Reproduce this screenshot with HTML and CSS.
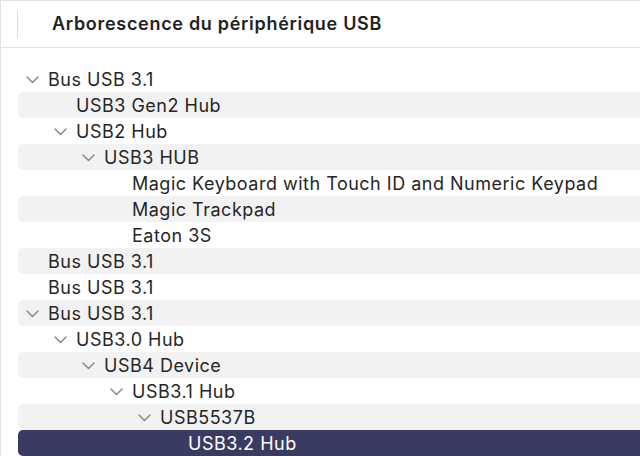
FILE: index.html
```html
<!DOCTYPE html>
<html lang="fr">
<head>
  <meta charset="UTF-8" />
  <meta name="viewport" content="width=device-width, initial-scale=1.0"/>
  <title>Arborescence du périphérique USB</title>
  <link rel="stylesheet" href="styles.css">
</head>
<body>
  <div class="header">
    <span class="col-sep"></span>
    <h2>Arborescence du périphérique USB</h2>
  </div>

  <ul class="tree">
    <li class="row lvl-0"><span class="toggle open"><svg viewBox="0 0 13 8"><polyline points="1,1 6.5,6.5 12,1"/></svg></span>Bus USB 3.1</li>
    <li class="row lvl-1 alt"><span class="toggle"></span>USB3 Gen2 Hub</li>
    <li class="row lvl-1"><span class="toggle open"><svg viewBox="0 0 13 8"><polyline points="1,1 6.5,6.5 12,1"/></svg></span>USB2 Hub</li>
    <li class="row lvl-2 alt"><span class="toggle open"><svg viewBox="0 0 13 8"><polyline points="1,1 6.5,6.5 12,1"/></svg></span>USB3 HUB</li>
    <li class="row lvl-3"><span class="toggle"></span>Magic Keyboard with Touch ID and Numeric Keypad</li>
    <li class="row lvl-3 alt"><span class="toggle"></span>Magic Trackpad</li>
    <li class="row lvl-3"><span class="toggle"></span>Eaton 3S</li>
    <li class="row lvl-0 alt"><span class="toggle"></span>Bus USB 3.1</li>
    <li class="row lvl-0"><span class="toggle"></span>Bus USB 3.1</li>
    <li class="row lvl-0 alt"><span class="toggle open"><svg viewBox="0 0 13 8"><polyline points="1,1 6.5,6.5 12,1"/></svg></span>Bus USB 3.1</li>
    <li class="row lvl-1"><span class="toggle open"><svg viewBox="0 0 13 8"><polyline points="1,1 6.5,6.5 12,1"/></svg></span>USB3.0 Hub</li>
    <li class="row lvl-2 alt"><span class="toggle open"><svg viewBox="0 0 13 8"><polyline points="1,1 6.5,6.5 12,1"/></svg></span>USB4 Device</li>
    <li class="row lvl-3"><span class="toggle open"><svg viewBox="0 0 13 8"><polyline points="1,1 6.5,6.5 12,1"/></svg></span>USB3.1 Hub</li>
    <li class="row lvl-4 alt"><span class="toggle open"><svg viewBox="0 0 13 8"><polyline points="1,1 6.5,6.5 12,1"/></svg></span>USB5537B</li>
    <li class="row lvl-5 selected"><span class="toggle"></span>USB3.2 Hub</li>
  </ul>
</body>
</html>
```

FILE: styles.css
```css
body {
  margin: 0;
  height: 456px;
  overflow: hidden;
  font-family: Inter, "Liberation Sans", sans-serif;
  color: #262626;
  background: #fff;
  border-left: 1px solid #e2e2e2;
  border-top: 1px solid #e2e2e2;
  box-sizing: border-box;
}
.header {
  display: flex;
  align-items: center;
  height: 46px;
  border-bottom: 1px solid #e2e2e2;
}
.col-sep {
  width: 1px;
  height: 27px;
  margin-left: 16px;
  background: #dcdcdc;
}
.header h2 {
  margin: 0 0 2px 34px;
  font-size: 18px;
  font-weight: 600;
  letter-spacing: 0.7px;
  color: #222;
}
.tree {
  list-style: none;
  margin: 18px -12px 0 17px;
  padding: 0;
}
.row {
  display: flex;
  align-items: center;
  height: 26px;
  font-size: 18px;
  letter-spacing: 0.5px;
  border-radius: 5px;
  white-space: nowrap;
}
.row.alt {
  background: #f2f2f2;
}
.row.selected {
  background: #3a3b63;
  color: #fff;
}
.toggle {
  flex: none;
  display: flex;
  align-items: center;
  width: 22px;
  height: 26px;
}
.toggle svg {
  width: 13px;
  height: 8px;
  margin-top: 1px;
  fill: none;
  stroke: #8a8a8a;
  stroke-width: 1.5;
  stroke-linecap: round;
  stroke-linejoin: round;
}
.lvl-0 { padding-left: 8px; }
.lvl-1 { padding-left: 36px; }
.lvl-2 { padding-left: 64px; }
.lvl-3 { padding-left: 92px; }
.lvl-4 { padding-left: 120px; }
.lvl-5 { padding-left: 148px; }
```
